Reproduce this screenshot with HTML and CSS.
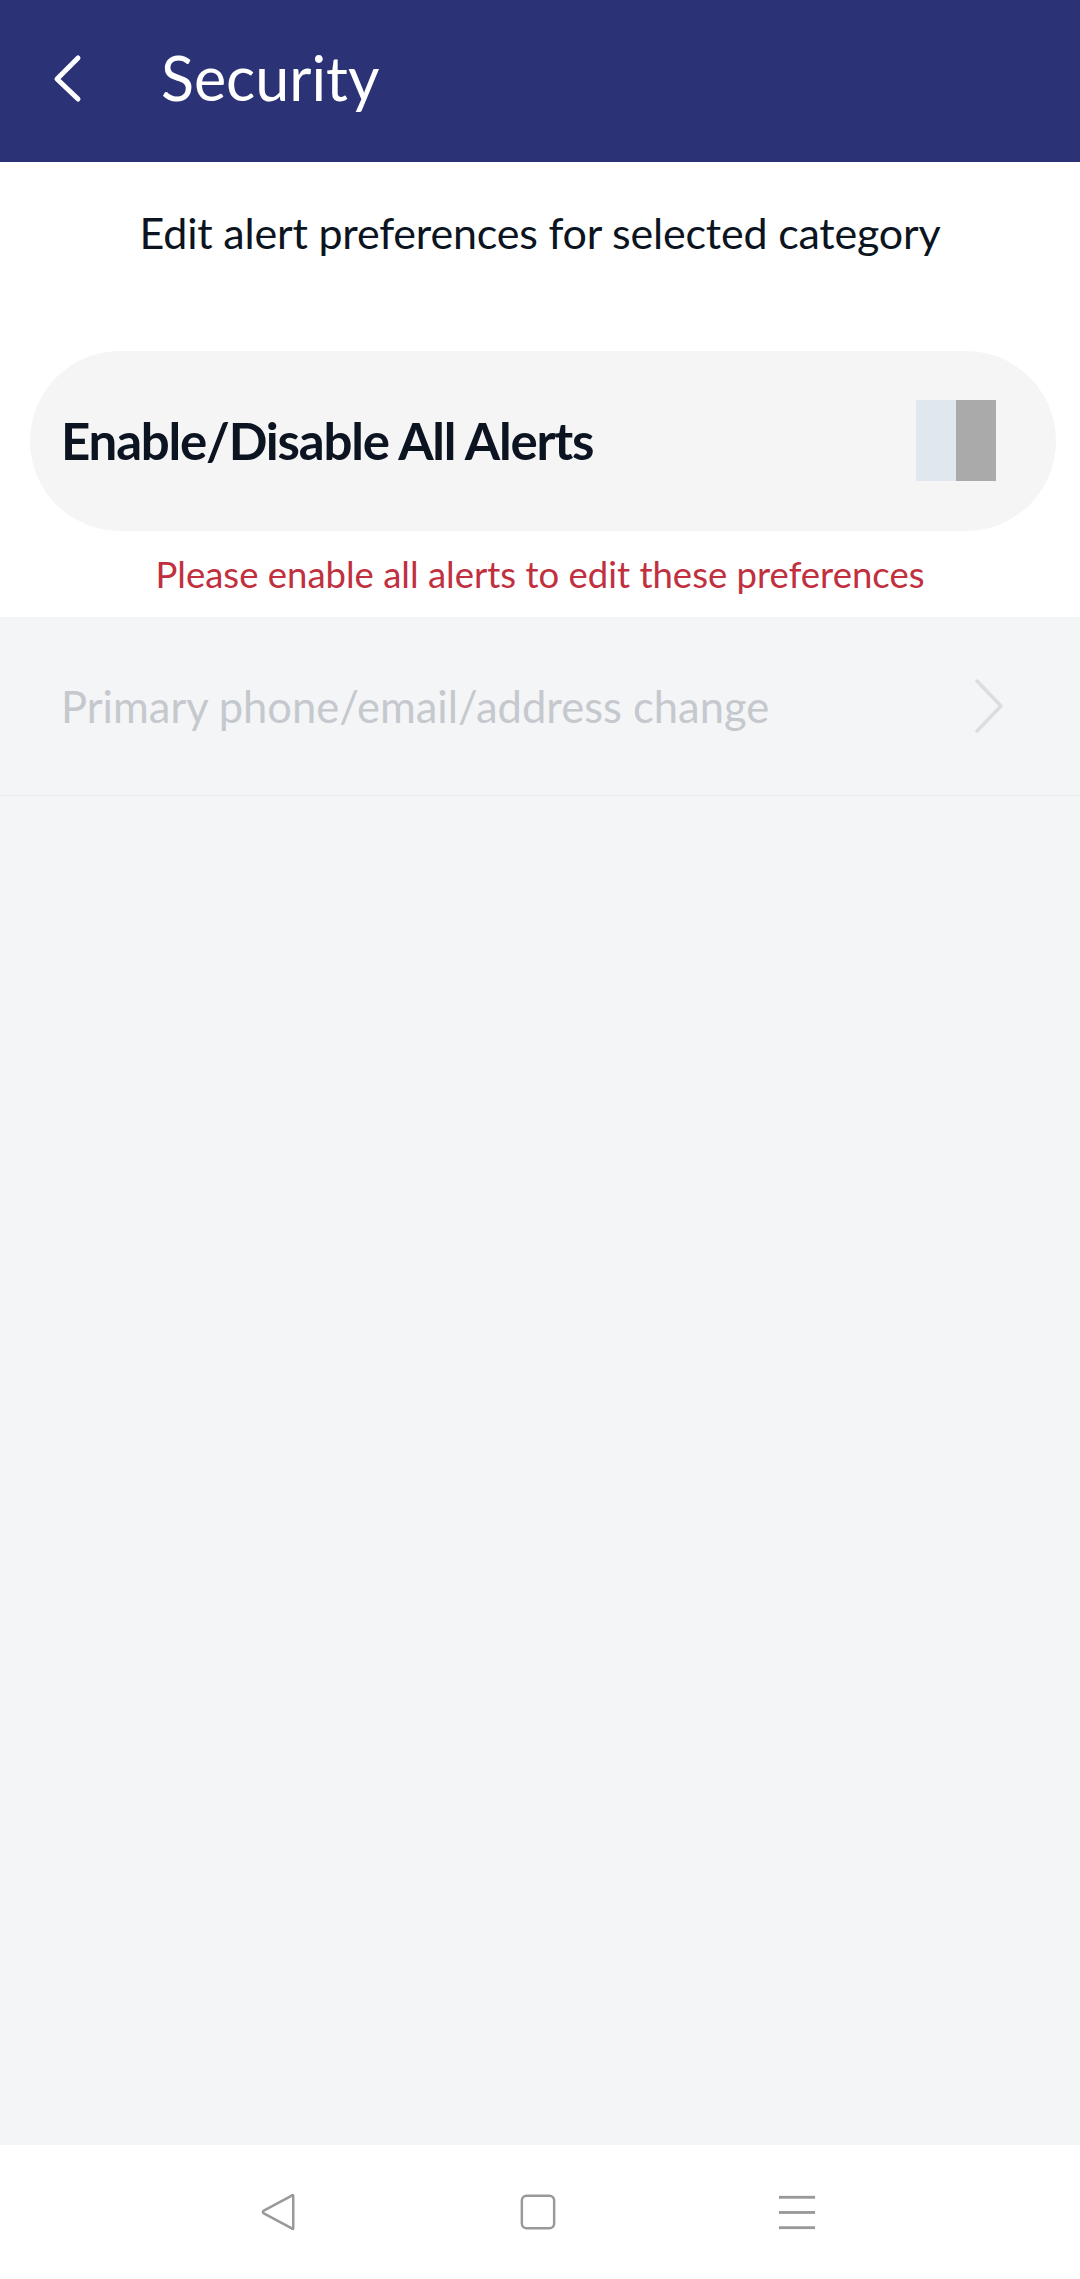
FILE: index.html
```html
<!DOCTYPE html>
<html lang="en">
<head>
<meta charset="utf-8">
<title>Security</title>
<link rel="stylesheet" href="styles.css">
</head>
<body>
    <div class="screen">
        <div class="topbar">
            <svg class="back" width="40" height="60" viewBox="0 0 40 60">
                <polyline points="26,9 5,30 26,50" fill="none" stroke="#ffffff" stroke-width="5" stroke-linecap="round" stroke-linejoin="round"/>
            </svg>
            <div class="title">Security</div>
        </div>

        <div class="intro">
            <p class="subtitle">Edit alert preferences for selected category</p>

            <div class="master">
                <span class="master-label">Enable/Disable All Alerts</span>
                <div class="switch">
                    <span class="track"></span>
                    <span class="thumb"></span>
                </div>
            </div>

            <p class="warning">Please enable all alerts to edit these preferences</p>
        </div>

        <div class="list">
            <div class="row">
                <span class="row-label">Primary phone/email/address change</span>
                <svg class="row-arrow" width="30" height="56" viewBox="0 0 30 56">
                    <polyline points="3,3 27,28 3,53" fill="none" stroke="#dcdde1" stroke-width="3.5" stroke-linecap="round" stroke-linejoin="round"/>
                </svg>
            </div>
        </div>

        <div class="navbar">
            <svg width="38" height="38" viewBox="0 0 40 40">
                <path d="M35 3 L35 37 Q35 39 33 37 L4 21.5 Q2 20 4 18.5 L33 3 Q35 1 35 3 Z" fill="none" stroke="#999999" stroke-width="2.6" stroke-linejoin="round"/>
            </svg>
            <svg width="38" height="38" viewBox="0 0 40 40">
                <rect x="3" y="3" width="34" height="34" rx="5" fill="none" stroke="#999999" stroke-width="2.6"/>
            </svg>
            <svg width="38" height="38" viewBox="0 0 40 40">
                <rect x="1" y="3" width="38" height="3" fill="#999999"/>
                <rect x="1" y="19" width="38" height="3" fill="#999999"/>
                <rect x="1" y="35" width="38" height="3" fill="#999999"/>
            </svg>
        </div>
    </div>
</body>
</html>
```

FILE: styles.css
```css
@charset "utf-8";

* {
    margin: 0;
    padding: 0;
    box-sizing: border-box;
}

html, body {
    height: 100%;
}

body {
    background: #ffffff;
    font-family: Lato, "Noto Sans", sans-serif;
    color: #0b1420;
}

.screen {
    height: 2279px;
    display: flex;
    flex-direction: column;
}

.topbar {
    height: 162px;
    background: #2b3275;
    display: flex;
    align-items: center;
    padding-left: 52px;
    padding-bottom: 6px;
}

.back {
    display: block;
    margin-top: 2px;
}

.title {
    margin-left: 69px;
    color: #ffffff;
    font-size: 61px;
    line-height: 1.2;
}

.intro {
    background: #ffffff;
}

.subtitle {
    padding-top: 45px;
    text-align: center;
    font-size: 43px;
    line-height: 1.2;
    letter-spacing: -0.2px;
}

.master {
    margin: 92px 24px 0 30px;
    height: 180px;
    border-radius: 90px;
    background: #f5f5f5;
    display: flex;
    align-items: center;
    justify-content: space-between;
    padding: 0 60px 0 31px;
}

.master-label {
    font-size: 51px;
    font-weight: bold;
    line-height: 1.2;
    letter-spacing: -1.2px;
}

.switch {
    display: flex;
    height: 81px;
}

.track {
    width: 40px;
    background: #e1e7ef;
}

.thumb {
    width: 40px;
    background: #aaaaaa;
}

.warning {
    margin-top: 22px;
    padding-bottom: 21px;
    text-align: center;
    color: #c0303f;
    font-size: 36.5px;
    line-height: 1.2;
}

.list {
    flex: 1;
    background: #f4f5f7;
}

.row {
    height: 179px;
    border-bottom: 1px solid #e8e9ec;
    display: flex;
    align-items: center;
    justify-content: space-between;
    padding: 0 76px 0 61px;
}

.row-label {
    color: #c5c9ce;
    font-size: 43.5px;
    line-height: 1.2;
}

.row-arrow {
    display: block;
}

.navbar {
    height: 134px;
    background: #ffffff;
    display: flex;
    align-items: center;
    justify-content: center;
    gap: 221px;
    padding-right: 4px;
}

.navbar svg {
    display: block;
}
```
